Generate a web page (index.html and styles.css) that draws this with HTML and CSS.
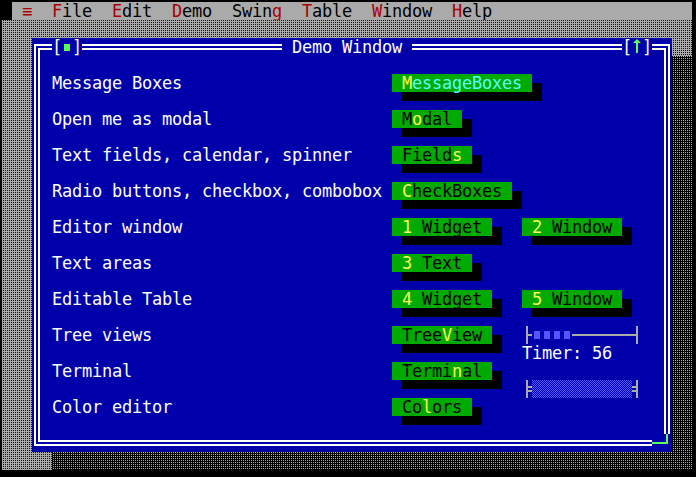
FILE: index.html
```html
<!DOCTYPE html>
<html>
<head>
<meta charset="utf-8">
<link rel="stylesheet" href="styles.css">
</head>
<body>
<div class="screen">
  <div class="menubar">
    <span class="mb-gap"></span>
    <span class="mb-items"> <span class="hot">≡</span>  <span class="hot">F</span>ile  <span class="hot">E</span>dit  <span class="hot">D</span>emo  Swin<span class="hot">g</span>  <span class="hot">T</span>able  <span class="hot">W</span>indow  <span class="hot">H</span>elp</span>
  </div>
  <div class="desktop">
    <div class="win-shadow"></div>
    <div class="window">
      <div class="frame"></div>
      <div class="titlebar">
        <span class="tb-btn tb-close"><span class="ch">[</span><span class="cell"><span class="close-sq"></span></span><span class="ch">]</span></span>
        <span class="title"> Demo Window </span>
        <span class="tb-btn tb-max"><span class="ch">[</span><span class="cell"><svg width="10" height="18" viewBox="0 0 10 18"><polygon points="5,1 9,5 6,5 6,15 4,15 4,5 1,5" fill="#55ff55"/></svg></span><span class="ch">]</span></span>
      </div>
      <div class="content">
        <div class="row">
          <div class="lbl">Message Boxes</div>
          <div class="c2"><span class="btn focus"> <span class="hk">M</span>essageBoxes </span></div>
        </div>
        <div class="row">
          <div class="lbl">Open me as modal</div>
          <div class="c2"><span class="btn"> M<span class="hk">o</span>dal </span></div>
        </div>
        <div class="row">
          <div class="lbl">Text fields, calendar, spinner</div>
          <div class="c2"><span class="btn"> Field<span class="hk">s</span> </span></div>
        </div>
        <div class="row">
          <div class="lbl">Radio buttons, checkbox, combobox</div>
          <div class="c2"><span class="btn"> <span class="hk">C</span>heckBoxes </span></div>
        </div>
        <div class="row">
          <div class="lbl">Editor window</div>
          <div class="c2"><span class="btn"> <span class="hk">1</span> Widget </span></div>
          <div class="c3"><span class="btn"> <span class="hk">2</span> Window </span></div>
        </div>
        <div class="row">
          <div class="lbl">Text areas</div>
          <div class="c2"><span class="btn"> <span class="hk">3</span> Text </span></div>
        </div>
        <div class="row">
          <div class="lbl">Editable Table</div>
          <div class="c2"><span class="btn"> <span class="hk">4</span> Widget </span></div>
          <div class="c3"><span class="btn"> <span class="hk">5</span> Window </span></div>
        </div>
        <div class="row">
          <div class="lbl">Tree views</div>
          <div class="c2"><span class="btn"> Tree<span class="hk">V</span>iew </span></div>
          <div class="c3 stack">
            <svg class="pbar" width="120" height="18" viewBox="0 0 120 18">
              <rect x="4" y="0" width="2" height="18" fill="#aaaaaa"/>
              <rect x="6" y="8" width="4" height="2" fill="#aaaaaa"/>
              <rect x="12" y="5" width="6" height="8" fill="#5555ff"/>
              <rect x="22" y="5" width="6" height="8" fill="#5555ff"/>
              <rect x="32" y="5" width="6" height="8" fill="#5555ff"/>
              <rect x="42" y="5" width="6" height="8" fill="#5555ff"/>
              <rect x="50" y="8" width="66" height="2" fill="#aaaaaa"/>
              <rect x="114" y="0" width="2" height="18" fill="#aaaaaa"/>
            </svg>
            <div class="timer">Timer: 56</div>
          </div>
        </div>
        <div class="row">
          <div class="lbl">Terminal</div>
          <div class="c2"><span class="btn"> Termi<span class="hk">n</span>al </span></div>
          <div class="c3 stack">
            <div class="blank"></div>
            <svg class="pbar" width="120" height="18" viewBox="0 0 120 18">
              <defs>
                <pattern id="dith" width="2" height="2" patternUnits="userSpaceOnUse">
                  <rect width="2" height="2" fill="#0000aa"/>
                  <rect x="0" y="0" width="1" height="1" fill="#5555ff"/>
                  <rect x="1" y="1" width="1" height="1" fill="#5555ff"/>
                </pattern>
              </defs>
              <rect x="4" y="0" width="2" height="18" fill="#aaaaaa"/>
              <rect x="6" y="6" width="4" height="2" fill="#aaaaaa"/>
              <rect x="6" y="10" width="4" height="2" fill="#aaaaaa"/>
              <rect x="10" y="0" width="100" height="18" fill="url(#dith)"/>
              <rect x="110" y="6" width="4" height="2" fill="#aaaaaa"/>
              <rect x="110" y="10" width="4" height="2" fill="#aaaaaa"/>
              <rect x="114" y="0" width="2" height="18" fill="#aaaaaa"/>
            </svg>
          </div>
        </div>
        <div class="row">
          <div class="lbl">Color editor</div>
          <div class="c2"><span class="btn"> Co<span class="hk">l</span>ors </span></div>
        </div>
      </div>
      <div class="resize"></div>
    </div>
  </div>
</div>
</body>
</html>
```

FILE: styles.css
```css
* { box-sizing: border-box; }
html, body { margin: 0; padding: 0; }
body {
  background: #000;
  width: 696px;
  height: 477px;
  overflow: hidden;
  font-family: "DejaVu Sans Mono", monospace;
  font-size: 17px;
  letter-spacing: -0.235px;
  line-height: 18px;
}
.screen {
  margin: 2px 0 0 2px;
  width: 690px;
  height: 468px;
}
.menubar {
  display: flex;
  height: 18px;
}
.mb-gap { width: 10px; background: #000; }
.mb-items {
  flex: 1;
  background: #aaaaaa;
  color: #000;
  white-space: pre;
}
.hot { color: #aa0000; }
.desktop {
  position: relative;
  height: 450px;
  background: conic-gradient(#0000aa 0 25%, #aaaaaa 0 100%) 0 0 / 2px 2px;
}
.win-shadow {
  position: absolute;
  left: 50px;
  top: 36px;
  width: 640px;
  height: 414px;
  background: conic-gradient(#aaaaaa 0 25%, #000 0 100%) 0 0 / 2px 2px;
}
.window {
  position: absolute;
  left: 30px;
  top: 18px;
  width: 640px;
  height: 414px;
  background: #0000aa;
  color: #fff;
}
.frame { position: absolute; inset: 0; }
.frame::before, .frame::after {
  content: "";
  position: absolute;
  border: 2px solid #fff;
}
.frame::before { left: 2px; top: 6px; right: 2px; bottom: 6px; }
.frame::after { left: 6px; top: 10px; right: 6px; bottom: 10px; }

.titlebar {
  position: relative;
  display: flex;
  height: 18px;
  white-space: pre;
}
.tb-btn {
  display: flex;
  background: #0000aa;
  color: #fff;
}
.ch { display: block; width: 10px; }
.tb-close { margin-left: 20px; }
.title { width: 130px; margin-left: 200px; background: #0000aa; }
.tb-max { margin-left: 210px; }
.cell {
  display: flex;
  width: 10px;
  height: 18px;
  align-items: center;
  justify-content: center;
}
.cell svg { display: block; }
.close-sq {
  display: block;
  width: 6px;
  height: 7px;
  background: #55ff55;
}

.content {
  margin-top: 18px;
  padding-left: 20px;
  display: flex;
  flex-direction: column;
}
.row {
  display: grid;
  grid-template-columns: 340px 130px 1fr;
  height: 36px;
  align-items: start;
}
.lbl { white-space: pre; color: #fff; }
.btn {
  display: inline-block;
  height: 18px;
  white-space: pre;
  background: #00aa00;
  color: #000;
  box-shadow: 10px 9px 0 #000;
}
.btn.focus { color: #55ffff; }
.hk { color: #ffff55; }
.stack { display: flex; flex-direction: column; }
.pbar { display: block; }
.blank { height: 18px; }
.timer { height: 18px; color: #fff; white-space: pre; }

.resize {
  position: absolute;
  left: 620px;
  top: 396px;
  width: 20px;
  height: 18px;
  background: #0000aa;
}
.resize::before, .resize::after {
  content: "";
  position: absolute;
  background: #55ff55;
}
.resize::before { left: 0; top: 8px; width: 16px; height: 2px; }
.resize::after { left: 14px; top: 0; width: 2px; height: 10px; }
```
